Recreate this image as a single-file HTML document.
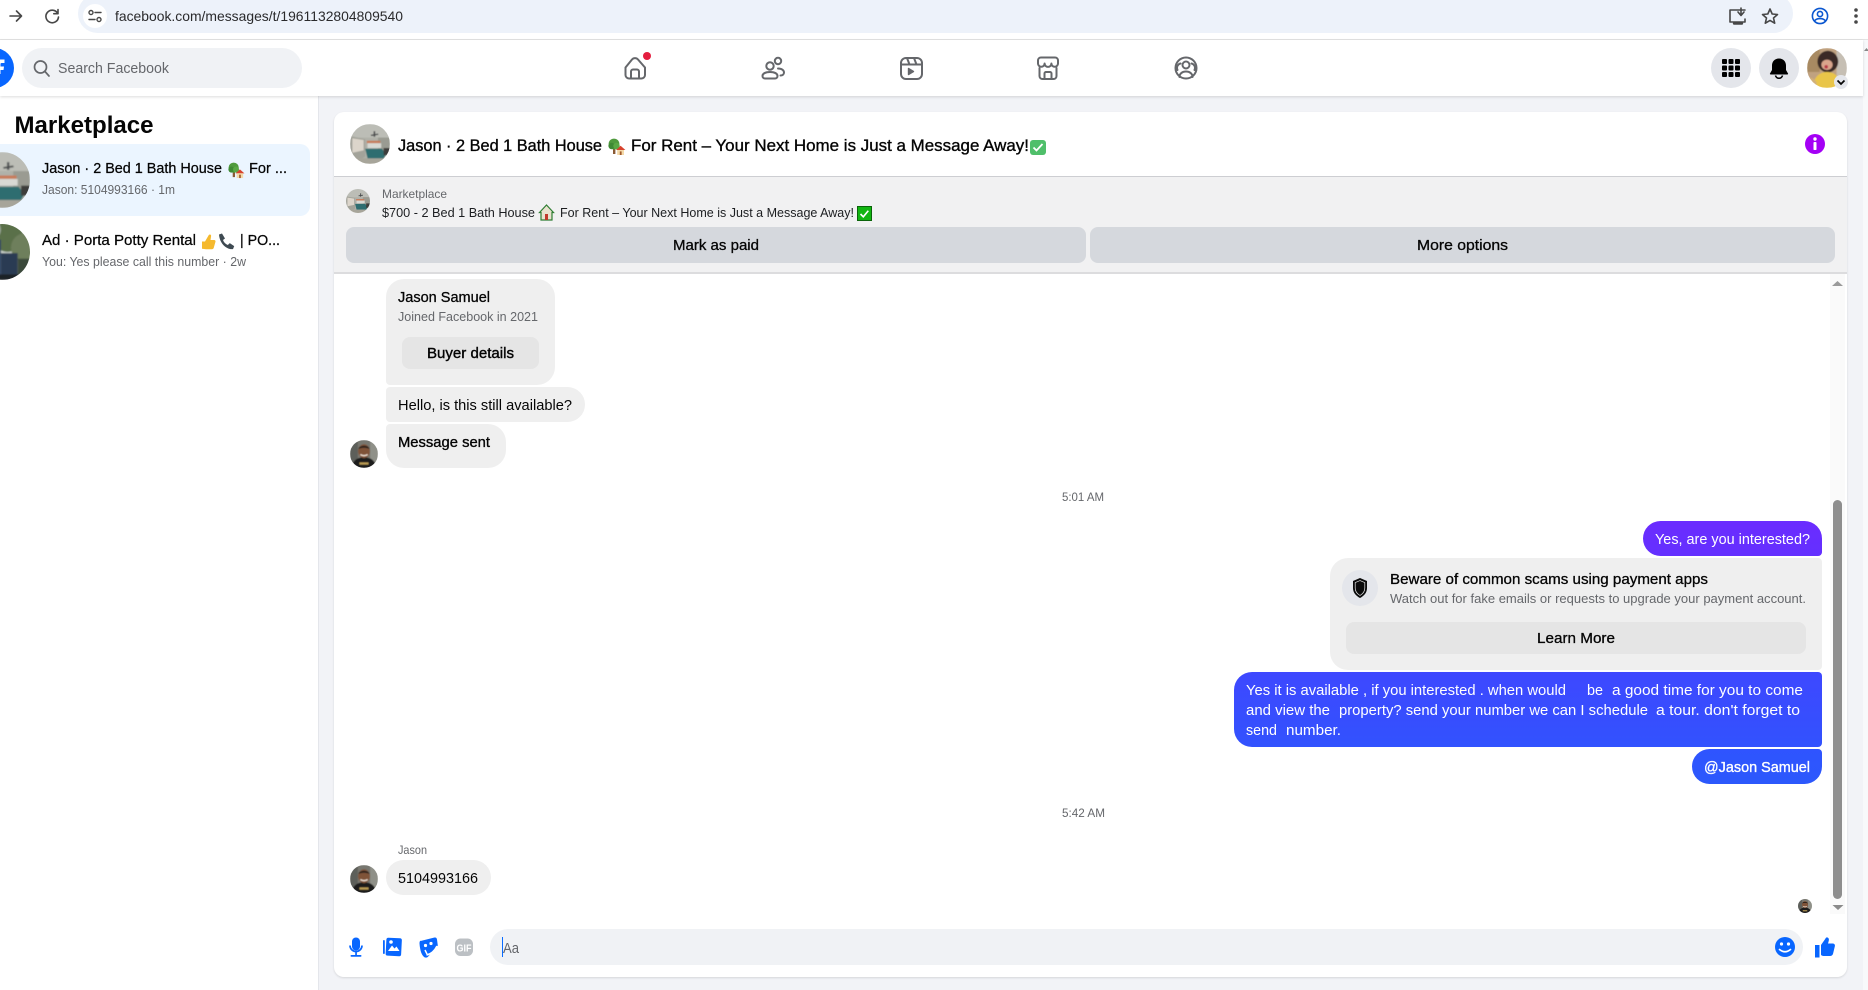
<!DOCTYPE html>
<html lang="en">
<head>
<meta charset="utf-8">
<title>Messenger | Facebook</title>
<style>
html,body{margin:0;padding:0}
body{position:relative;width:1868px;height:990px;overflow:hidden;background:#f2f3f7;font-family:"Liberation Sans",sans-serif}
.b{position:absolute;box-sizing:border-box}
svg.o{position:absolute;left:0;top:0}
svg text{font-family:"Liberation Sans",sans-serif;white-space:pre}
.t15{font-size:15px;fill:#050505}
.t13{font-size:13px;fill:#65676b}
.t12{font-size:12px;fill:#65676b}
.m{stroke:#050505;stroke-width:.4px}
.w{fill:#fff}
.wm{fill:#fff;stroke:#fff;stroke-width:.35px}
.i{fill:none;stroke:#65676b;stroke-width:2;stroke-linecap:round;stroke-linejoin:round}
.c{fill:none;stroke:#474747;stroke-width:1.6;stroke-linecap:round;stroke-linejoin:round}
</style>
</head>
<body>
<!-- browser chrome -->
<div class="b" style="left:0;top:0;width:1868px;height:40px;background:#fff;border-bottom:1px solid #e3e3e3"></div>
<div class="b" style="left:78px;top:-6px;width:1715px;height:39px;background:#edf2fa;border-radius:20px"></div>
<div class="b" style="left:83px;top:4px;width:24px;height:24px;background:#fff;border-radius:50%"></div>
<!-- fb header -->
<div class="b" style="left:0;top:40px;width:1863px;height:56px;background:#fff;box-shadow:0 1px 3px rgba(0,0,0,.14);z-index:2"></div>
<div class="b" style="left:1863px;top:40px;width:5px;height:950px;background:#f8f9fb"></div>
<div class="b" style="left:22px;top:48px;width:280px;height:40px;background:#f0f2f5;border-radius:20px;z-index:3"></div>
<div class="b" style="left:1711px;top:48px;width:40px;height:40px;background:#e4e6eb;border-radius:50%;z-index:3"></div>
<div class="b" style="left:1759px;top:48px;width:40px;height:40px;background:#e4e6eb;border-radius:50%;z-index:3"></div>
<!-- sidebar -->
<div class="b" style="left:0;top:96px;width:319px;height:894px;background:#fff;border-right:1px solid #e4e6eb"></div>
<div class="b" style="left:0;top:144px;width:310px;height:72px;background:#ebf5ff;border-radius:0 10px 10px 0"></div>
<!-- card -->
<div class="b" style="left:334px;top:112px;width:1513px;height:865px;background:#fff;border-radius:10px;box-shadow:0 1px 2px rgba(0,0,0,.12)"></div>
<div class="b" style="left:334px;top:176px;width:1513px;height:98px;background:#f1f1f2;border-top:1px solid #cdced2;border-bottom:2px solid #dcdcde"></div>
<div class="b" style="left:346px;top:227px;width:740px;height:36px;background:#d5d8dd;border-radius:8px"></div>
<div class="b" style="left:1090px;top:227px;width:745px;height:36px;background:#d5d8dd;border-radius:8px"></div>
<!-- scrollbar -->
<div class="b" style="left:1830px;top:274px;width:15px;height:640px;background:#fafafa"></div>
<div class="b" style="left:1833px;top:500px;width:9px;height:399px;background:#8e8e8e;border-radius:5px"></div>
<!-- bubbles -->
<div class="b" style="left:386px;top:279px;width:169px;height:106px;background:#efefef;border-radius:18px 18px 18px 4px"></div>
<div class="b" style="left:402px;top:337px;width:137px;height:32px;background:#e5e5e5;border-radius:8px"></div>
<div class="b" style="left:386px;top:387px;width:199px;height:35px;background:#efefef;border-radius:4px 18px 18px 4px"></div>
<div class="b" style="left:386px;top:424px;width:120px;height:44px;background:#efefef;border-radius:4px 18px 18px 18px"></div>
<div class="b" style="left:1643px;top:521px;width:179px;height:35px;background:linear-gradient(#6b2cff,#6430ff);border-radius:18px 18px 4px 18px"></div>
<div class="b" style="left:1330px;top:558px;width:492px;height:112px;background:#efefef;border-radius:18px 4px 4px 18px"></div>
<div class="b" style="left:1342px;top:570px;width:36px;height:36px;background:#e4e6eb;border-radius:50%"></div>
<div class="b" style="left:1346px;top:622px;width:460px;height:32px;background:#e5e5e5;border-radius:8px"></div>
<div class="b" style="left:1234px;top:672px;width:588px;height:75px;background:linear-gradient(#3e48ff,#3252fe);border-radius:18px 4px 4px 18px"></div>
<div class="b" style="left:1692px;top:749px;width:130px;height:35px;background:linear-gradient(#2f54ff,#2c58fc);border-radius:18px 4px 18px 18px"></div>
<div class="b" style="left:386px;top:860px;width:105px;height:35px;background:#efefef;border-radius:18px"></div>
<!-- composer -->
<div class="b" style="left:490px;top:929px;width:1313px;height:36px;background:#f0f2f5;border-radius:18px"></div>
<div class="b" style="left:502px;top:937px;width:1px;height:20px;background:#0a6cff"></div>

<svg class="o" width="1868" height="990" viewBox="0 0 1868 990" style="z-index:5" xmlns="http://www.w3.org/2000/svg">
<defs>
<clipPath id="cc"><circle cx="50" cy="50" r="50"/></clipPath>
<filter id="bl" x="-10%" y="-10%" width="120%" height="120%"><feGaussianBlur stdDeviation="1.5"/></filter>
<symbol id="bed" viewBox="0 0 100 100"><g clip-path="url(#cc)"><g filter="url(#bl)">
<rect width="100" height="100" fill="#b0b1a9"/><rect x="0" y="0" width="100" height="34" fill="#bcbdb6"/><path d="M0 30l38 8v44L0 100z" fill="#a3a39a"/>
<path d="M6 36l28 4v26L6 72z" fill="#dcd5cb"/><rect x="70" y="34" width="30" height="40" fill="#9a9b92"/>
<rect x="42" y="42" width="34" height="6" fill="#c87a58"/><rect x="44" y="48" width="34" height="12" fill="#d8d9d4"/>
<path d="M38 62h42l10 14-6 10H44z" fill="#2e6d6f"/><rect x="84" y="60" width="16" height="18" fill="#3c3d3a"/>
<path d="M0 84L44 86h42l14-6v20H0z" fill="#a7a59a"/>
<path d="M52 27l18-3 1 3-18 3z" fill="#3a3d40"/><rect x="59" y="18" width="4" height="14" fill="#4a4c4e"/></g></g></symbol>
<symbol id="jas" viewBox="0 0 100 100"><g clip-path="url(#cc)"><g filter="url(#bl)">
<rect width="100" height="100" fill="#77776f"/><rect x="0" y="0" width="28" height="100" fill="#5d5e5a"/><rect x="72" y="0" width="28" height="100" fill="#8f9088"/>
<path d="M6 100c4-30 22-38 44-38s40 8 44 38z" fill="#1f1d1a"/><ellipse cx="50" cy="40" rx="21" ry="25" fill="#7f5339"/>
<path d="M30 32c2-14 36-16 40 0-12-6-28-6-40 0z" fill="#2a211b"/><path d="M37 52q13 8 26 0" stroke="#eee2d6" stroke-width="5" fill="none"/>
<rect x="34" y="80" width="32" height="8" fill="#b99b52"/></g></g></symbol>
<symbol id="pot" viewBox="0 0 100 100"><g clip-path="url(#cc)"><g filter="url(#bl)">
<rect width="100" height="100" fill="#cfd5d0"/><circle cx="60" cy="22" r="28" fill="#5a6f49"/><circle cx="92" cy="42" r="26" fill="#6e7f5c"/><circle cx="30" cy="10" r="18" fill="#9da89a"/>
<rect x="0" y="28" width="48" height="72" fill="#2f4564"/><rect x="14" y="30" width="3" height="70" fill="#21334b"/><rect x="48" y="52" width="30" height="48" fill="#2b3b52"/><rect x="78" y="62" width="22" height="38" fill="#3b4a3a"/><rect x="0" y="90" width="100" height="10" fill="#1f2226"/></g></g></symbol>
<symbol id="me" viewBox="0 0 100 100"><g clip-path="url(#cc)"><g filter="url(#bl)">
<rect width="100" height="100" fill="#c0a280"/><rect x="0" y="0" width="32" height="60" fill="#a88a62"/><rect x="74" y="0" width="26" height="100" fill="#c6bfb4"/>
<ellipse cx="52" cy="34" rx="26" ry="27" fill="#3a2a26"/><ellipse cx="50" cy="42" rx="14" ry="13" fill="#d9a58c"/><circle cx="48" cy="47" r="4.500" fill="#b8394a"/>
<path d="M14 100c2-28 18-40 36-40s32 10 36 40z" fill="#e9c548"/><path d="M0 76q14-6 24 10v14H0z" fill="#d2b07a"/></g></g></symbol>
<symbol id="tree" viewBox="0 0 18 18"><rect x="5" y="9" width="2.400" height="7" fill="#8a5a34"/><circle cx="6" cy="6" r="5.400" fill="#4f9a3d"/><circle cx="3.600" cy="8" r="3.200" fill="#3f8a34"/><circle cx="8.500" cy="8" r="3.200" fill="#5aa845"/><path d="M8 12l4.600-4.200L17.400 12z" fill="#d8432d"/><rect x="9.200" y="12" width="6.800" height="5" fill="#f4d9a8"/><rect x="11.800" y="13.400" width="1.800" height="3.600" fill="#a15a2c"/></symbol>
</defs>

<!-- chrome icons -->
<path class="c" d="M10 16h11.500M16.500 11 21.500 16l-5 5"/>
<path class="c" d="M57.500 13a6.300 6.300 0 1 0 1 4M58 9.500v4.200h-4.200"/>
<g class="c" style="stroke-width:1.400"><circle cx="91" cy="12.500" r="2"/><path d="M95 12.500h6M89 19.500h6"/><circle cx="99" cy="19.500" r="2"/></g>
<text x="115" y="21" font-size="14" fill="#2a2a2c" textLength="288" lengthAdjust="spacingAndGlyphs">facebook.com/messages/t/1961132804809540</text>
<g class="c"><path d="M1745 10h-15v12h15v-3"/><path d="M1734 23.500h8" stroke-width="2.400"/><path d="M1741 8v7m-3-3 3 3.500 3-3.500"/></g>
<path class="c" d="M1770 9l2.200 5 5.300.5-4 3.500 1.200 5.200-4.700-2.800-4.700 2.800 1.200-5.200-4-3.500 5.300-.5z"/>
<g fill="none" stroke="#0b57d0" stroke-width="1.600"><circle cx="1820" cy="16" r="7.600"/><circle cx="1820" cy="14" r="2.600"/><path d="M1814.500 21c2-3.300 9-3.300 11 0"/></g>
<g fill="#474747"><circle cx="1856" cy="10" r="1.800"/><circle cx="1856" cy="16" r="1.800"/><circle cx="1856" cy="22" r="1.800"/></g>

<!-- fb logo + search -->
<circle cx="-6" cy="68" r="20" fill="#0866ff"/>
<path d="M0 59.500h4.500v3.500H1.500q-1 0-1 1v2.500H4l-.5 3.500H.5v4H0z" fill="#fff"/>
<g fill="none" stroke="#65676b" stroke-width="1.700" stroke-linecap="round"><circle cx="40.500" cy="67" r="6"/><path d="M45 71.500 49 76"/></g>
<text class="t15" x="58" y="73" style="fill:#65676b" textLength="111" lengthAdjust="spacingAndGlyphs">Search Facebook</text>

<!-- nav icons -->
<g class="i">
<path d="M625.500 67.500 632 59.500a4 4 0 0 1 6 0l7 8V75a3.500 3.500 0 0 1-3.500 3.500H629a3.500 3.500 0 0 1-3.500-3.500z"/>
<path d="M631 78V71.500a2 2 0 0 1 2-2h4a2 2 0 0 1 2 2V78"/>
<circle cx="770" cy="66" r="3.700"/><circle cx="778" cy="61" r="3.200"/>
<path d="M765 78.500a2.500 2.500 0 0 1-2.500-2.500c0-2.500 3-4 7.500-4s7.500 1.500 7.500 4a2.500 2.500 0 0 1-2.500 2.500z"/>
<path d="M778 68.500c3.800 0 6 1.800 6 4 0 1.800-1.500 3-3.500 3"/>
<rect x="901" y="58" width="21" height="21" rx="5"/><path d="M901 64.500h21M907 58l2.500 6.500M914 58l2.500 6.500"/>
<path d="M908.500 68.500v6l5-3z" fill="#65676b" stroke-width="1.400"/>
<path d="M1041 57.500h14a3 3 0 0 1 3 3v3a3.300 3.300 0 0 1-6.600 0 3.300 3.300 0 0 1-6.800 0 3.300 3.300 0 0 1-6.600 0v-3a3 3 0 0 1 3-3z"/>
<path d="M1039.500 68v8a3 3 0 0 0 3 3h11a3 3 0 0 0 3-3v-8"/><path d="M1044.500 79v-5.500a1.500 1.500 0 0 1 1.500-1.500h4a1.500 1.500 0 0 1 1.500 1.500V79"/>
<circle cx="1186" cy="68" r="10.500"/><circle cx="1186" cy="65" r="3.500"/><path d="M1179.500 77c0-3.500 3-5.500 6.500-5.500s6.500 2 6.500 5.500"/><path d="M1177.500 70c-1.500-3 .5-6 3-6.500M1194.500 70c1.500-3-.5-6-3-6.500"/>
</g>
<circle cx="647" cy="56" r="4" fill="#e41e3f"/>

<!-- right header -->
<g fill="#000"><rect x="1722" y="59" width="5" height="5" rx="1"/><rect x="1728.500" y="59" width="5" height="5" rx="1"/><rect x="1735" y="59" width="5" height="5" rx="1"/><rect x="1722" y="65.500" width="5" height="5" rx="1"/><rect x="1728.500" y="65.500" width="5" height="5" rx="1"/><rect x="1735" y="65.500" width="5" height="5" rx="1"/><rect x="1722" y="72" width="5" height="5" rx="1"/><rect x="1728.500" y="72" width="5" height="5" rx="1"/><rect x="1735" y="72" width="5" height="5" rx="1"/></g>
<path d="M1779 58.500c-4.500 0-7 3.300-7 7v4.500l-2 3.500c-.3.600 0 1 .7 1h16.600c.7 0 1-.4.700-1l-2-3.500v-4.500c0-3.700-2.500-7-7-7z" fill="#000"/>
<path d="M1775.500 75.500a3.600 3.600 0 0 0 7 0" fill="none" stroke="#000" stroke-width="1.600"/>
<use href="#me" x="1807" y="48" width="40" height="40"/>
<circle cx="1841" cy="82" r="7" fill="#e4e6eb"/><path d="M1837.500 80.500l3.500 3.500 3.500-3.500" fill="none" stroke="#050505" stroke-width="1.700"/>
<path d="M1864 51l2.500-3 2.500 3z" fill="#888"/>

<!-- sidebar -->
<text x="14.500" y="133" font-size="24" font-weight="700" fill="#050505" textLength="139" lengthAdjust="spacingAndGlyphs">Marketplace</text>
<use href="#bed" x="-26" y="152" width="56" height="56"/>
<text class="t15 m" x="42" y="173" textLength="180" lengthAdjust="spacingAndGlyphs" style="stroke-width:.25px">Jason · 2 Bed 1 Bath House</text>
<use href="#tree" x="228" y="162" width="17" height="17"/>
<text class="t15 m" x="249" y="173" textLength="38" lengthAdjust="spacingAndGlyphs" style="stroke-width:.25px">For ...</text>
<text class="t13" x="42" y="194" textLength="133" lengthAdjust="spacingAndGlyphs">Jason: 5104993166 · 1m</text>
<use href="#pot" x="-26" y="224" width="56" height="56"/>
<text class="t15 m" x="42" y="245" textLength="154" lengthAdjust="spacingAndGlyphs" style="stroke-width:.25px">Ad · Porta Potty Rental</text>
<path d="M202 241.500h3l3.500-6c1-1.800 3-1 2.600.8l-.6 3.700h3.500c1.300 0 1.800 1 1.400 2l-1.700 6c-.3.800-.9 1.200-1.800 1.200H206l-4-.5z" fill="#f5b92e"/>
<path d="M219 234.500l3-1 3 5-2 1.500c.8 2.400 2.500 4 4.800 5l2-1.900 4.400 3-1.200 3c-7 .8-14-6.500-14-15.600z" fill="#3f4a52"/>
<text class="t15 m" x="240" y="245" textLength="40" lengthAdjust="spacingAndGlyphs" style="stroke-width:.25px">| PO...</text>
<text class="t13" x="42" y="266" textLength="204" lengthAdjust="spacingAndGlyphs">You: Yes please call this number · 2w</text>

<!-- card header -->
<use href="#bed" x="350" y="124" width="40" height="40"/>
<text x="398" y="151" font-size="17" fill="#050505" stroke="#050505" stroke-width=".35" textLength="204" lengthAdjust="spacingAndGlyphs">Jason · 2 Bed 1 Bath House</text>
<use href="#tree" x="608" y="138" width="18" height="18"/>
<text x="631" y="151" font-size="17" fill="#050505" stroke="#050505" stroke-width=".35" textLength="398" lengthAdjust="spacingAndGlyphs">For Rent – Your Next Home is Just a Message Away!</text>
<rect x="1030" y="140" width="16" height="15" rx="3" fill="#4fbf6a"/><path d="M1033.500 147.500l3 3 6-6.500" fill="none" stroke="#fff" stroke-width="1.800"/>
<circle cx="1815" cy="144" r="10" fill="#a400f5"/><circle cx="1815" cy="139" r="1.700" fill="#fff"/><rect x="1813.500" y="142" width="3" height="8" rx=".8" fill="#fff"/>

<!-- banner -->
<use href="#bed" x="346" y="189" width="24" height="24"/>
<text class="t12" x="382" y="198" textLength="65" lengthAdjust="spacingAndGlyphs">Marketplace</text>
<text x="382" y="217" font-size="13" fill="#1c1e21" textLength="153" lengthAdjust="spacingAndGlyphs">$700 - 2 Bed 1 Bath House</text>
<path d="M546.500 205l7 7.500h-1.500v7.500h-11v-7.500H539.500z" fill="#e9e2cf" stroke="#2e7d32" stroke-width="1.200"/><rect x="545" y="214" width="3" height="6" fill="#c0392b"/>
<text x="560" y="217" font-size="13" fill="#1c1e21" textLength="294" lengthAdjust="spacingAndGlyphs">For Rent – Your Next Home is Just a Message Away!</text>
<rect x="857.500" y="206.500" width="14" height="14" fill="#11b511" stroke="#0a640a"/><path d="M860.500 214l2.800 2.800 5-6" fill="none" stroke="#fff" stroke-width="1.600"/>
<text class="t15 m" x="673" y="250" textLength="86" lengthAdjust="spacingAndGlyphs" style="stroke-width:.3px">Mark as paid</text>
<text class="t15 m" x="1417" y="250" textLength="91" lengthAdjust="spacingAndGlyphs" style="stroke-width:.3px">More options</text>

<path d="M1832 286l5.500-5 5.500 5z" fill="#9a9a9a"/>
<path d="M1832.500 905l5.500 5 5.500-5z" fill="#8a8a8a"/>

<!-- left messages -->
<text class="t15 m" x="398" y="302" textLength="92" lengthAdjust="spacingAndGlyphs" style="stroke-width:.3px">Jason Samuel</text>
<text class="t13" x="398" y="321" textLength="140" lengthAdjust="spacingAndGlyphs">Joined Facebook in 2021</text>
<text class="t15 m" x="427" y="358" textLength="87" lengthAdjust="spacingAndGlyphs">Buyer details</text>
<text class="t15" x="398" y="410" textLength="174" lengthAdjust="spacingAndGlyphs">Hello, is this still available?</text>
<text class="t15 m" x="398" y="447" textLength="92" lengthAdjust="spacingAndGlyphs" style="stroke-width:.35px">Message sent</text>
<use href="#jas" x="350" y="440" width="28" height="28"/>
<text class="t12" x="1062" y="501" textLength="42" lengthAdjust="spacingAndGlyphs">5:01 AM</text>

<!-- right messages -->
<text class="t15 w" x="1655" y="544" textLength="155" lengthAdjust="spacingAndGlyphs">Yes, are you interested?</text>
<path d="M1360 578l7 3v7c0 5-3.300 8-7 10-3.700-2-7-5-7-10v-7z" fill="#0a0a0a"/>
<path d="M1360 580.600l4.800 2v5.400c0 3.500-2.200 6-4.800 7.500-2.600-1.500-4.800-4-4.800-7.500v-5.400z" fill="none" stroke="#e8e8e8" stroke-width=".7"/>
<text class="t15 m" x="1390" y="584" textLength="318" lengthAdjust="spacingAndGlyphs" style="stroke-width:.3px">Beware of common scams using payment apps</text>
<text class="t13" x="1390" y="603" textLength="416" lengthAdjust="spacingAndGlyphs">Watch out for fake emails or requests to upgrade your payment account.</text>
<text class="t15 m" x="1537" y="643" textLength="78" lengthAdjust="spacingAndGlyphs" style="stroke-width:.3px">Learn More</text>

<text class="t15 w" x="1246" y="695" textLength="320" lengthAdjust="spacingAndGlyphs">Yes it is available , if you interested . when would</text>
<text class="t15 w" x="1587" y="695" textLength="16" lengthAdjust="spacingAndGlyphs">be</text>
<text class="t15 w" x="1612" y="695" textLength="191" lengthAdjust="spacingAndGlyphs">a good time for you to come</text>
<text class="t15 w" x="1246" y="715" textLength="84" lengthAdjust="spacingAndGlyphs">and view the</text>
<text class="t15 w" x="1339" y="715" textLength="309" lengthAdjust="spacingAndGlyphs">property? send your number we can I schedule</text>
<text class="t15 w" x="1656" y="715" textLength="144" lengthAdjust="spacingAndGlyphs">a tour. don't forget to</text>
<text class="t15 w" x="1246" y="735" textLength="31" lengthAdjust="spacingAndGlyphs">send</text>
<text class="t15 w" x="1286" y="735" textLength="55" lengthAdjust="spacingAndGlyphs">number.</text>
<text class="t15 wm" x="1704" y="772" textLength="106" lengthAdjust="spacingAndGlyphs">@Jason Samuel</text>

<text class="t12" x="1062" y="817" textLength="43" lengthAdjust="spacingAndGlyphs">5:42 AM</text>
<text class="t12" x="398" y="854" textLength="29" lengthAdjust="spacingAndGlyphs">Jason</text>
<text class="t15" x="398" y="883" textLength="80" lengthAdjust="spacingAndGlyphs">5104993166</text>
<use href="#jas" x="350" y="865" width="28" height="28"/>
<use href="#jas" x="1798" y="899" width="14" height="14"/>

<!-- composer icons -->
<g fill="#0866ff">
<rect x="352" y="937.500" width="8" height="13" rx="4"/>
<path d="M350 945.500a6 6 0 0 0 12 0" fill="none" stroke="#0866ff" stroke-width="1.700"/><rect x="355.200" y="951" width="1.700" height="4.500"/><rect x="350.500" y="955" width="11" height="1.800" rx=".9"/>
<rect x="386" y="938" width="15.500" height="18" rx="2" transform="rotate(3 394 947)"/>
<rect x="383" y="940" width="1.800" height="14" rx=".9"/>
<path d="M388 951l4-5.500 2.500 3 2-2 3 4.500z" fill="#fff"/><circle cx="391" cy="942" r="1.800" fill="#fff"/>
<path d="M420.500 941l14-3.500c1.500-.3 2.300.5 2.500 2l.8 6-10 11.500c-1.500 1-3 .8-4-.2-2.800-2.500-4-8.500-4.300-13.500 0-1.200.3-2.300 1-2.800z"/>
<circle cx="425.500" cy="945.500" r="1.600" fill="#fff"/><circle cx="431" cy="943.500" r="1.600" fill="#fff"/><path d="M426.500 955c5-1 8-4 10.500-9M425 950l2 4" fill="none" stroke="#fff" stroke-width="1.500"/>
</g>
<rect x="455" y="938.500" width="18" height="17.500" rx="5.500" fill="#bcc0c4"/>
<text x="456.500" y="951.500" font-size="10" font-weight="700" fill="#fff" textLength="15" lengthAdjust="spacingAndGlyphs">GIF</text>
<text class="t15" x="503" y="953" style="fill:#65676b" textLength="16" lengthAdjust="spacingAndGlyphs">Aa</text>
<circle cx="1785" cy="947" r="10" fill="#0866ff"/><circle cx="1781.500" cy="944" r="1.600" fill="#fff"/><circle cx="1788.500" cy="944" r="1.600" fill="#fff"/><path d="M1779.500 949.500q5.500 4.500 11 0" fill="none" stroke="#fff" stroke-width="1.700" stroke-linecap="round"/>
<rect x="1815" y="945" width="4.500" height="12.500" fill="#0866ff"/>
<path d="M1821 945l4.200-6c.6-1 1-2 2.300-1.500 1.500.6 1.600 2 1.200 3.500l-.7 2.500h4.500c1.900 0 2.800 1.300 2.300 3l-1.700 7c-.4 1.600-1.500 2.500-3.200 2.500H1824c-1.500 0-3-.6-3-1.500z" fill="#0866ff"/>
</svg>
</body>
</html>
